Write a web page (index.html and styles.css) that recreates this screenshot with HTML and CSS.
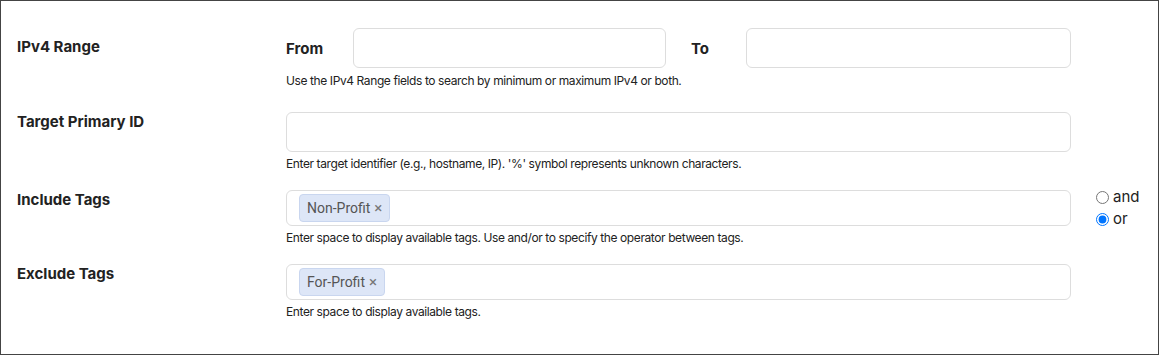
FILE: index.html
```html
<!DOCTYPE html>
<html lang="en">
<head>
  <meta charset="UTF-8">
  <meta name="viewport" content="width=device-width, initial-scale=1.0">
  <title>Target Search</title>
  <link rel="stylesheet" href="styles.css">
</head>
<body>
  <div class="search-panel">
    <div class="search-row search-row-range">
      <div class="search-label">IPv4 Range</div>
      <div class="search-field">
        <div class="range-inputs">
          <label class="range-label" for="ipFrom">From</label>
          <input type="text" id="ipFrom" class="search-input">
          <label class="range-label range-label-to" for="ipTo">To</label>
          <input type="text" id="ipTo" class="search-input">
        </div>
        <div class="search-help">Use the IPv4 Range fields to search by minimum or maximum IPv4 or both.</div>
      </div>
    </div>

    <div class="search-row">
      <div class="search-label">Target Primary ID</div>
      <div class="search-field">
        <input type="text" id="targetId" class="search-input">
        <div class="search-help">Enter target identifier (e.g., hostname, IP). '%' symbol represents unknown characters.</div>
      </div>
    </div>

    <div class="search-row">
      <div class="search-label">Include Tags</div>
      <div class="search-field">
        <div class="tag-input">
          <span class="tag-chip">Non-Profit <span class="tag-remove">×</span></span>
        </div>
        <div class="search-help">Enter space to display available tags. Use and/or to specify the operator between tags.</div>
      </div>
      <div class="tag-operator">
        <label class="operator-option"><input type="radio" name="tagOp" value="and">and</label>
        <label class="operator-option"><input type="radio" name="tagOp" value="or" checked>or</label>
      </div>
    </div>

    <div class="search-row">
      <div class="search-label">Exclude Tags</div>
      <div class="search-field">
        <div class="tag-input">
          <span class="tag-chip">For-Profit <span class="tag-remove">×</span></span>
        </div>
        <div class="search-help">Enter space to display available tags.</div>
      </div>
    </div>
  </div>
</body>
</html>
```

FILE: styles.css
```css
* {
  box-sizing: border-box;
}

html, body {
  margin: 0;
  background-color: #ffffff;
}

body {
  font-family: "Inter", "Liberation Sans", sans-serif;
  color: #222;
}

.search-panel {
  width: 1159px;
  height: 355px;
  border: 1px solid #444;
  padding: 27px 0 0 16px;
}

.search-row {
  display: grid;
  grid-template-columns: 269px 785px auto;
  margin-bottom: 18px;
}

.search-row-range {
  margin-bottom: 23px;
}

.search-label {
  font-size: 15px;
  font-weight: 700;
  line-height: 20px;
}

.search-row-range .search-label {
  padding-top: 9px;
}

.search-field {
  display: flex;
  flex-direction: column;
}

.range-inputs {
  display: grid;
  grid-template-columns: 67px 313px 80px 1fr;
  align-items: center;
}

.range-label {
  font-size: 15px;
  font-weight: 700;
}

.range-label-to {
  padding-left: 25px;
}

.search-input {
  width: 100%;
  height: 40px;
  border: 1px solid #ddd;
  border-radius: 6px;
  padding: 6px 12px;
  font-size: 14px;
  outline: none;
}

.search-help {
  font-size: 12px;
  line-height: 16px;
  letter-spacing: -0.4px;
  margin-top: 4px;
}

.search-row-range .search-help {
  margin-top: 5px;
}

.tag-input {
  height: 36px;
  border: 1px solid #ddd;
  border-radius: 6px;
  padding: 4px 12px;
  display: flex;
  align-items: center;
}

.tag-chip {
  display: inline-flex;
  align-items: center;
  height: 28px;
  padding: 0 7px;
  background-color: #dde6f7;
  border: 1px solid #c9d6ef;
  border-radius: 4px;
  font-family: "Roboto", "Liberation Sans", sans-serif;
  font-size: 14px;
  color: #555;
}

.tag-remove {
  margin-left: 4px;
  font-size: 15px;
  color: #777;
}

.tag-operator {
  display: flex;
  flex-direction: column;
  padding-left: 22px;
  margin-top: -4px;
}

.operator-option {
  display: flex;
  align-items: center;
  font-size: 15px;
  line-height: 22px;
  color: #222;
}

.operator-option input {
  margin: 0 4px 0 3px;
  width: 13px;
  height: 13px;
}
```
